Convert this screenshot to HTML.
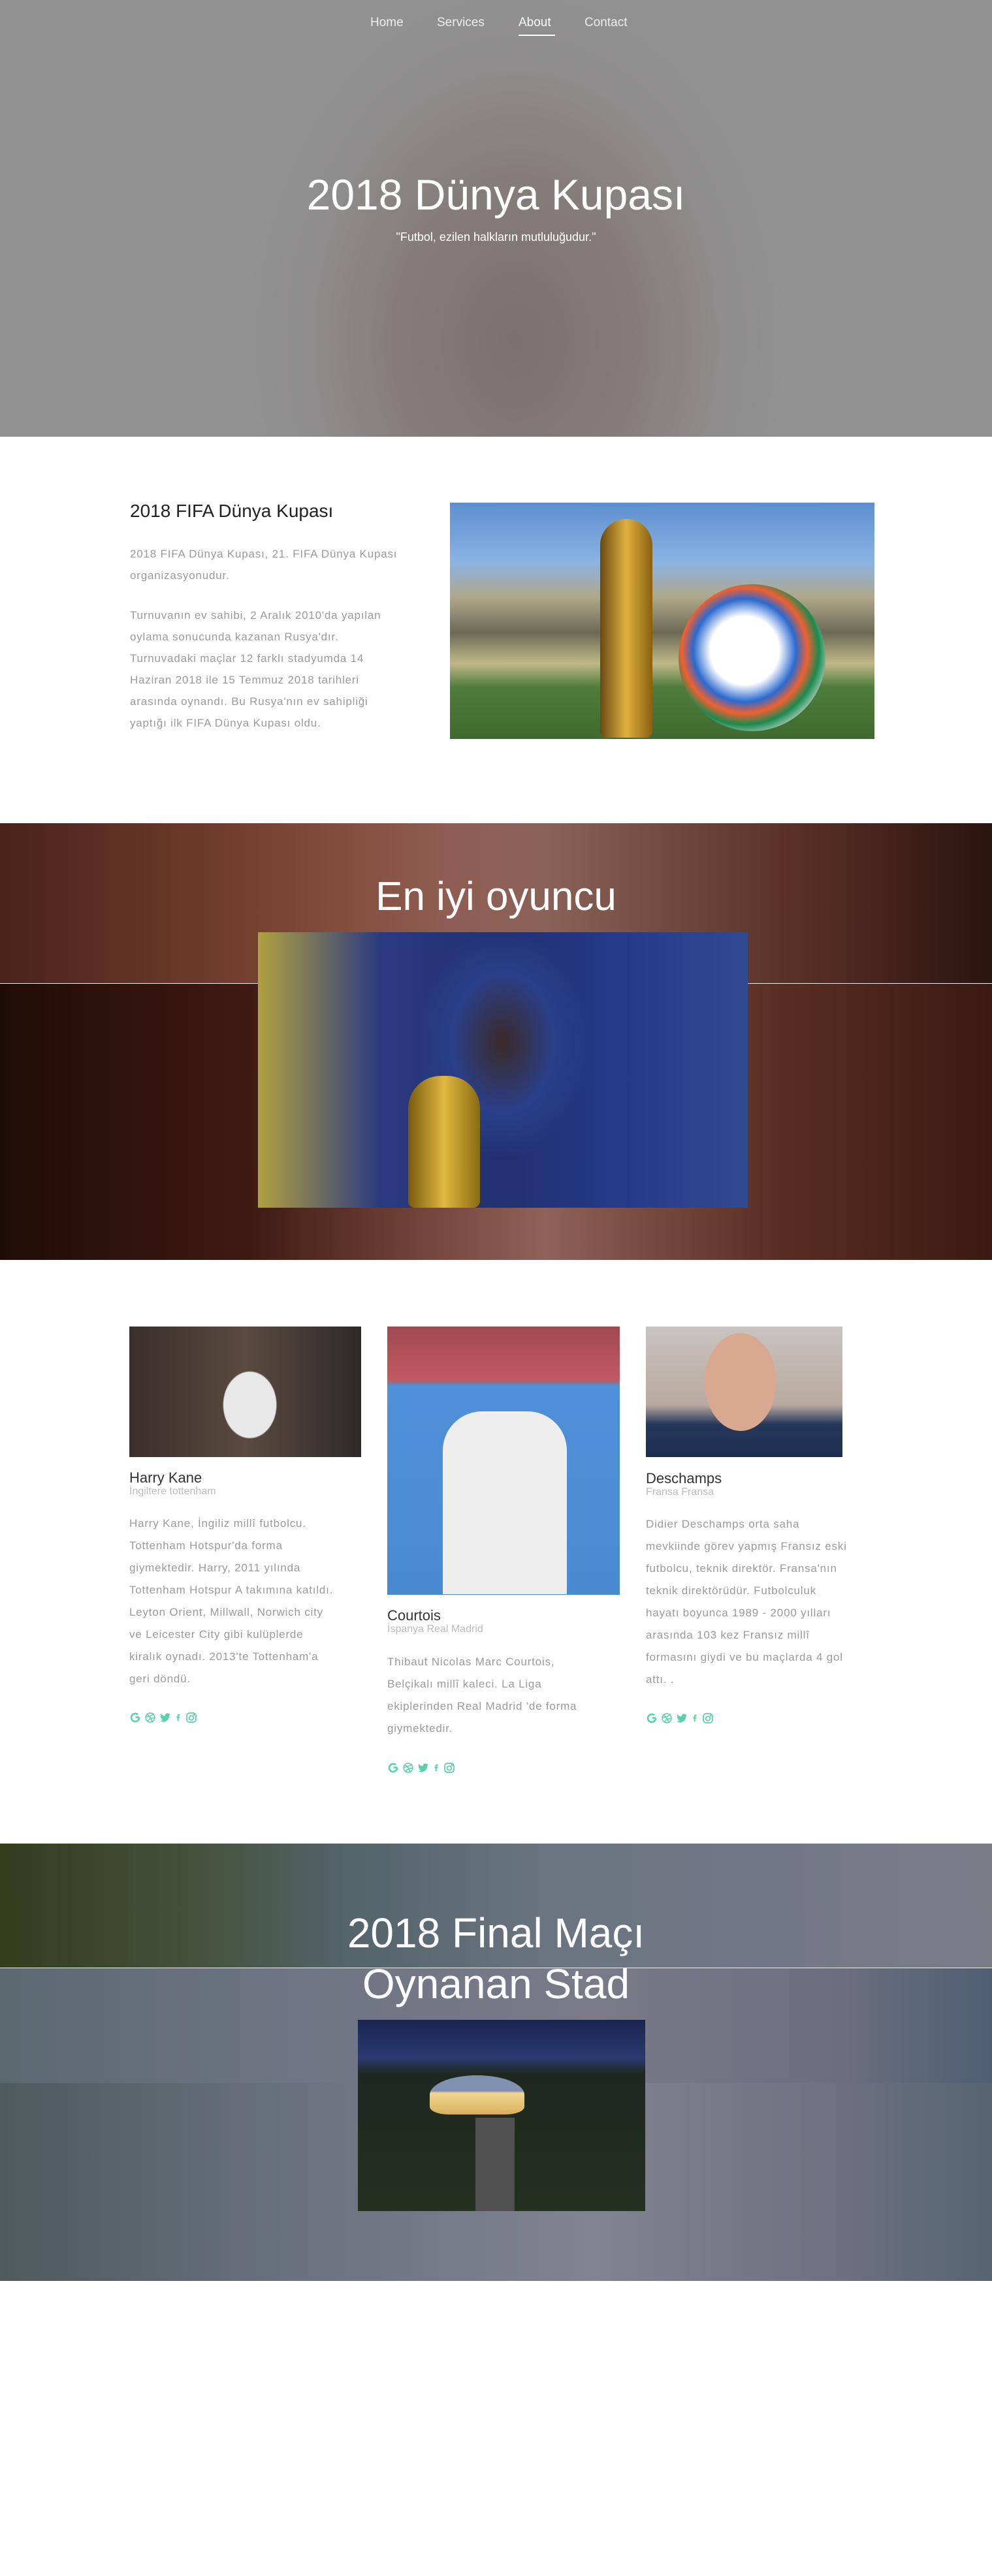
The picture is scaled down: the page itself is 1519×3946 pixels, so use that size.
<!DOCTYPE html>
<html><head><meta charset="utf-8">
<style>
*{margin:0;padding:0;box-sizing:border-box}
body{width:1519px;height:3946px;position:relative;background:#fff;font-family:"Liberation Sans",sans-serif;overflow:hidden}
.a{position:absolute}
.hero{left:0;top:0;width:1519px;height:669px;background:radial-gradient(ellipse 420px 560px at 52% 78%,#7a7170 0%,#857d7b 45%,#8e8c8c 75%,#929292 100%)}
.nav a{position:absolute;top:24px;color:#eee;font-size:19px;text-decoration:none}
.c{text-align:center;color:#fff;width:1519px;left:0}
p.t{color:#9a9a9a;font-size:17px;line-height:33px;letter-spacing:.8px;white-space:nowrap}
.name{color:#333;font-size:22px}
.sub{color:#bbb;font-size:16px}
.ic{display:flex;gap:5px;align-items:center}
.ic svg{width:18px;height:18px}
</style></head><body>
<div class="a hero"></div>
<div class="nav">
<a style="left:567px">Home</a><a style="left:669px">Services</a><a style="left:794px;color:#fff">About</a><a style="left:895px">Contact</a>
</div>
<div class="a" style="left:794px;top:53px;width:56px;height:2px;background:#fff"></div>
<div class="a c" style="top:260px;font-size:66px;font-weight:300">2018 Dünya Kupası</div>
<div class="a c" style="top:353px;font-size:18px">"Futbol, ezilen halkların mutluluğudur."</div>

<div class="a" style="left:199px;top:767px;font-size:28px;color:#222">2018 FIFA Dünya Kupası</div>
<p class="a t" style="left:199px;top:832px">2018 FIFA Dünya Kupası, 21. FIFA Dünya Kupası<br>organizasyonudur.</p>
<p class="a t" style="left:199px;top:926px">Turnuvanın ev sahibi, 2 Aralık 2010'da yapılan<br>oylama sonucunda kazanan Rusya'dır.<br>Turnuvadaki maçlar 12 farklı stadyumda 14<br>Haziran 2018 ile 15 Temmuz 2018 tarihleri<br>arasında oynandı. Bu Rusya'nın ev sahipliği<br>yaptığı ilk FIFA Dünya Kupası oldu.</p>
<div class="a" style="left:689px;top:770px;width:650px;height:362px;background:linear-gradient(180deg,#5d8fd0 0%,#8ab3e3 25%,#b0a88a 40%,#6b6a55 55%,#bfb888 68%,#4f7d3b 78%,#3f6a2f 100%)">
 <div class="a" style="left:230px;top:25px;width:80px;height:335px;border-radius:40px 40px 10px 10px;background:linear-gradient(90deg,#6a4a10,#e0b040,#8a6010)"></div>
 <div class="a" style="left:350px;top:125px;width:225px;height:225px;border-radius:50%;background:radial-gradient(circle at 45% 45%,#fff 30%,#2a6ad0 45%,#f06030 55%,#1a8a50 65%,#eee 80%)"></div>
</div>

<div class="a" style="left:0;top:1261px;width:1519px;height:245px;background:linear-gradient(90deg,#4a2218 0%,#74402f 25%,#905d52 45%,#8a6258 55%,#5a3026 80%,#2a140e 100%)"></div>
<div class="a" style="left:0;top:1507px;width:1519px;height:423px;background:linear-gradient(90deg,#200c07 0%,#3e1a12 25%,#7a4a3e 45%,#8f6258 55%,#5a2e22 78%,#3a1a12 100%)"></div>
<div class="a" style="left:0;top:1506px;width:1519px;height:1px;background:#eee"></div>
<div class="a c" style="top:1338px;font-size:62px">En iyi oyuncu</div>
<div class="a" style="left:395px;top:1428px;width:750px;height:422px;background:radial-gradient(ellipse 130px 180px at 50% 40%,#3a2a28 0%,#2b3f8a 60%,transparent 100%),linear-gradient(90deg,#b0a040 0%,#2a3a80 25%,#203070 50%,#263a8a 75%,#304a90 100%)">
 <div class="a" style="left:230px;top:220px;width:110px;height:202px;border-radius:50px 50px 10px 10px;background:linear-gradient(90deg,#7a5a10,#e0b840,#8a6a10)"></div>
</div>

<div class="a" style="left:198px;top:2032px;width:355px;height:200px;background:radial-gradient(ellipse 80px 100px at 52% 60%,#e8e8e8 50%,transparent 52%),linear-gradient(90deg,#3a2e2a,#5a4a40,#2e2a2a)"></div>
<div class="a name" style="left:198px;top:2251px">Harry Kane</div>
<div class="a sub" style="left:198px;top:2276px">İngiltere tottenham</div>
<p class="a t" style="left:198px;top:2317px;line-height:34px">Harry Kane, İngiliz millî futbolcu.<br>Tottenham Hotspur'da forma<br>giymektedir. Harry, 2011 yılında<br>Tottenham Hotspur A takımına katıldı.<br>Leyton Orient, Millwall, Norwich city<br>ve Leicester City gibi kulüplerde<br>kiralık oynadı. 2013'te Tottenham'a<br>geri döndü.</p>
<div class="a ic" style="left:198px;top:2622px">
<svg viewBox="0 0 18 18"><path d="M15 8.5H9.5M15 8.5A6 6 0 1 1 13 4.5" fill="none" stroke="#56d2a6" stroke-width="2.6"/></svg>
<svg viewBox="0 0 18 18" fill="none" stroke="#56d2a6" stroke-width="1.5"><circle cx="9" cy="9" r="7"/><path d="M4 4c4 3 7 7 8 12M2.5 8c5 0 9-2 12-5M5 15c2-4 6-6 11-5"/></svg>
<svg viewBox="0 0 18 18"><path d="M17 4c-.6.3-1.2.4-1.9.5.7-.4 1.2-1 1.4-1.8-.6.4-1.3.6-2 .8A3.3 3.3 0 0 0 8.9 6.5 9.3 9.3 0 0 1 2.1 3a3.3 3.3 0 0 0 1 4.4c-.5 0-1-.2-1.5-.4 0 1.6 1.1 2.9 2.6 3.2-.5.1-1 .2-1.5.1.4 1.3 1.6 2.2 3.1 2.3A6.6 6.6 0 0 1 1 14a9.3 9.3 0 0 0 14.3-8.3c.7-.5 1.2-1 1.7-1.700z" fill="#56d2a6"/></svg>
<svg viewBox="0 0 18 18" style="width:12px"><path d="M10 17V10h2.5l.4-3H10V5.3c0-.8.3-1.4 1.4-1.4H13V1.300C12.600 1.200 11.800 1 10.900 1 8.700 1 7 2.400 7 4.900V7H5v3h2v7z" fill="#56d2a6"/></svg>
<svg viewBox="0 0 18 18" fill="none" stroke="#56d2a6" stroke-width="1.7"><rect x="2" y="2" width="14" height="14" rx="4"/><circle cx="9" cy="9.5" r="3.3"/><circle cx="13" cy="5" r=".6" fill="#56d2a6"/></svg>
</div>

<div class="a" style="left:593px;top:2032px;width:356px;height:411px;background:linear-gradient(180deg,#a04a50 0%,#c25a60 20%,#4f90d8 22%,#4a8ad0 100%)">
 <div class="a" style="left:85px;top:130px;width:190px;height:280px;background:#eee;border-radius:60px 60px 0 0"></div>
</div>
<div class="a name" style="left:593px;top:2462px">Courtois</div>
<div class="a sub" style="left:593px;top:2487px">İspanya Real Madrid</div>
<p class="a t" style="left:593px;top:2529px;line-height:34px">Thibaut Nicolas Marc Courtois,<br>Belçikalı millî kaleci. La Liga<br>ekiplerinden Real Madrid 'de forma<br>giymektedir.</p>
<div class="a ic" style="left:593px;top:2699px">
<svg viewBox="0 0 18 18"><path d="M15 8.5H9.5M15 8.5A6 6 0 1 1 13 4.5" fill="none" stroke="#56d2a6" stroke-width="2.6"/></svg>
<svg viewBox="0 0 18 18" fill="none" stroke="#56d2a6" stroke-width="1.5"><circle cx="9" cy="9" r="7"/><path d="M4 4c4 3 7 7 8 12M2.5 8c5 0 9-2 12-5M5 15c2-4 6-6 11-5"/></svg>
<svg viewBox="0 0 18 18"><path d="M17 4c-.6.3-1.2.4-1.9.5.7-.4 1.2-1 1.4-1.8-.6.4-1.3.6-2 .8A3.3 3.3 0 0 0 8.9 6.5 9.3 9.3 0 0 1 2.1 3a3.3 3.3 0 0 0 1 4.4c-.5 0-1-.2-1.5-.4 0 1.6 1.1 2.9 2.6 3.2-.5.1-1 .2-1.5.1.4 1.3 1.6 2.2 3.1 2.3A6.6 6.6 0 0 1 1 14a9.3 9.3 0 0 0 14.3-8.3c.7-.5 1.2-1 1.7-1.7z" fill="#56d2a6"/></svg>
<svg viewBox="0 0 18 18" style="width:12px"><path d="M10 17V10h2.5l.4-3H10V5.3c0-.8.3-1.4 1.4-1.4H13V1.3C12.6 1.2 11.8 1 10.9 1 8.7 1 7 2.4 7 4.9V7H5v3h2v7z" fill="#56d2a6"/></svg>
<svg viewBox="0 0 18 18" fill="none" stroke="#56d2a6" stroke-width="1.7"><rect x="2" y="2" width="14" height="14" rx="4"/><circle cx="9" cy="9.5" r="3.3"/><circle cx="13" cy="5" r=".6" fill="#56d2a6"/></svg>
</div>

<div class="a" style="left:989px;top:2032px;width:301px;height:200px;background:linear-gradient(180deg,#c9c4c0 0%,#b8aaa0 60%,#24365a 75%,#1e2e50 100%)">
 <div class="a" style="left:90px;top:10px;width:110px;height:150px;border-radius:50%;background:#d8a890"></div>
</div>
<div class="a name" style="left:989px;top:2252px">Deschamps</div>
<div class="a sub" style="left:989px;top:2277px">Fransa Fransa</div>
<p class="a t" style="left:989px;top:2318px;line-height:34px">Didier Deschamps orta saha<br>mevkiinde görev yapmış Fransız eski<br>futbolcu, teknik direktör. Fransa'nın<br>teknik direktörüdür. Futbolculuk<br>hayatı boyunca 1989 - 2000 yılları<br>arasında 103 kez Fransız millî<br>formasını giydi ve bu maçlarda 4 gol<br>attı. .</p>
<div class="a ic" style="left:989px;top:2623px">
<svg viewBox="0 0 18 18"><path d="M15 8.5H9.5M15 8.5A6 6 0 1 1 13 4.5" fill="none" stroke="#56d2a6" stroke-width="2.6"/></svg>
<svg viewBox="0 0 18 18" fill="none" stroke="#56d2a6" stroke-width="1.5"><circle cx="9" cy="9" r="7"/><path d="M4 4c4 3 7 7 8 12M2.5 8c5 0 9-2 12-5M5 15c2-4 6-6 11-5"/></svg>
<svg viewBox="0 0 18 18"><path d="M17 4c-.6.3-1.2.4-1.9.5.7-.4 1.2-1 1.4-1.8-.6.4-1.3.6-2 .8A3.3 3.3 0 0 0 8.9 6.5 9.3 9.3 0 0 1 2.1 3a3.3 3.3 0 0 0 1 4.4c-.5 0-1-.2-1.5-.4 0 1.6 1.1 2.9 2.6 3.2-.5.1-1 .2-1.5.1.4 1.3 1.6 2.2 3.1 2.3A6.6 6.6 0 0 1 1 14a9.3 9.3 0 0 0 14.3-8.3c.7-.5 1.2-1 1.7-1.7z" fill="#56d2a6"/></svg>
<svg viewBox="0 0 18 18" style="width:12px"><path d="M10 17V10h2.5l.4-3H10V5.3c0-.8.3-1.4 1.4-1.4H13V1.3C12.6 1.2 11.8 1 10.9 1 8.7 1 7 2.4 7 4.9V7H5v3h2v7z" fill="#56d2a6"/></svg>
<svg viewBox="0 0 18 18" fill="none" stroke="#56d2a6" stroke-width="1.7"><rect x="2" y="2" width="14" height="14" rx="4"/><circle cx="9" cy="9.5" r="3.3"/><circle cx="13" cy="5" r=".6" fill="#56d2a6"/></svg>
</div>

<div class="a" style="left:0;top:2824px;width:1519px;height:190px;background:linear-gradient(90deg,#333d1c 0%,#45523c 20%,#53646a 35%,#6a7480 55%,#737888 80%,#7a7d88 100%)"></div>
<div class="a" style="left:0;top:3015px;width:1519px;height:176px;background:linear-gradient(90deg,#5c6870 0%,#6e7584 30%,#7a7a88 60%,#6a6e80 85%,#4f5f72 100%)"></div>
<div class="a" style="left:0;top:3191px;width:1519px;height:303px;background:linear-gradient(90deg,#4e5a5c 0%,#6a7280 30%,#808490 60%,#6c7080 85%,#566474 100%)"></div>
<div class="a" style="left:0;top:3014px;width:1519px;height:1px;background:#eee"></div>
<div class="a c" style="top:2922px;font-size:64px;line-height:78px">2018 Final Maçı<br>Oynanan Stad</div>
<div class="a" style="left:548px;top:3094px;width:440px;height:293px;background:linear-gradient(180deg,#1a2550 0%,#2a3a70 20%,#1e2820 28%,#243020 100%)">
 <div class="a" style="left:110px;top:85px;width:145px;height:60px;border-radius:50% 50% 20% 20%;background:linear-gradient(180deg,#8090b0 0%,#8090b0 40%,#f0d890 45%,#d8b060 100%)"></div>
 <div class="a" style="left:180px;top:150px;width:60px;height:143px;background:#505050"></div>
</div>
</body></html>
